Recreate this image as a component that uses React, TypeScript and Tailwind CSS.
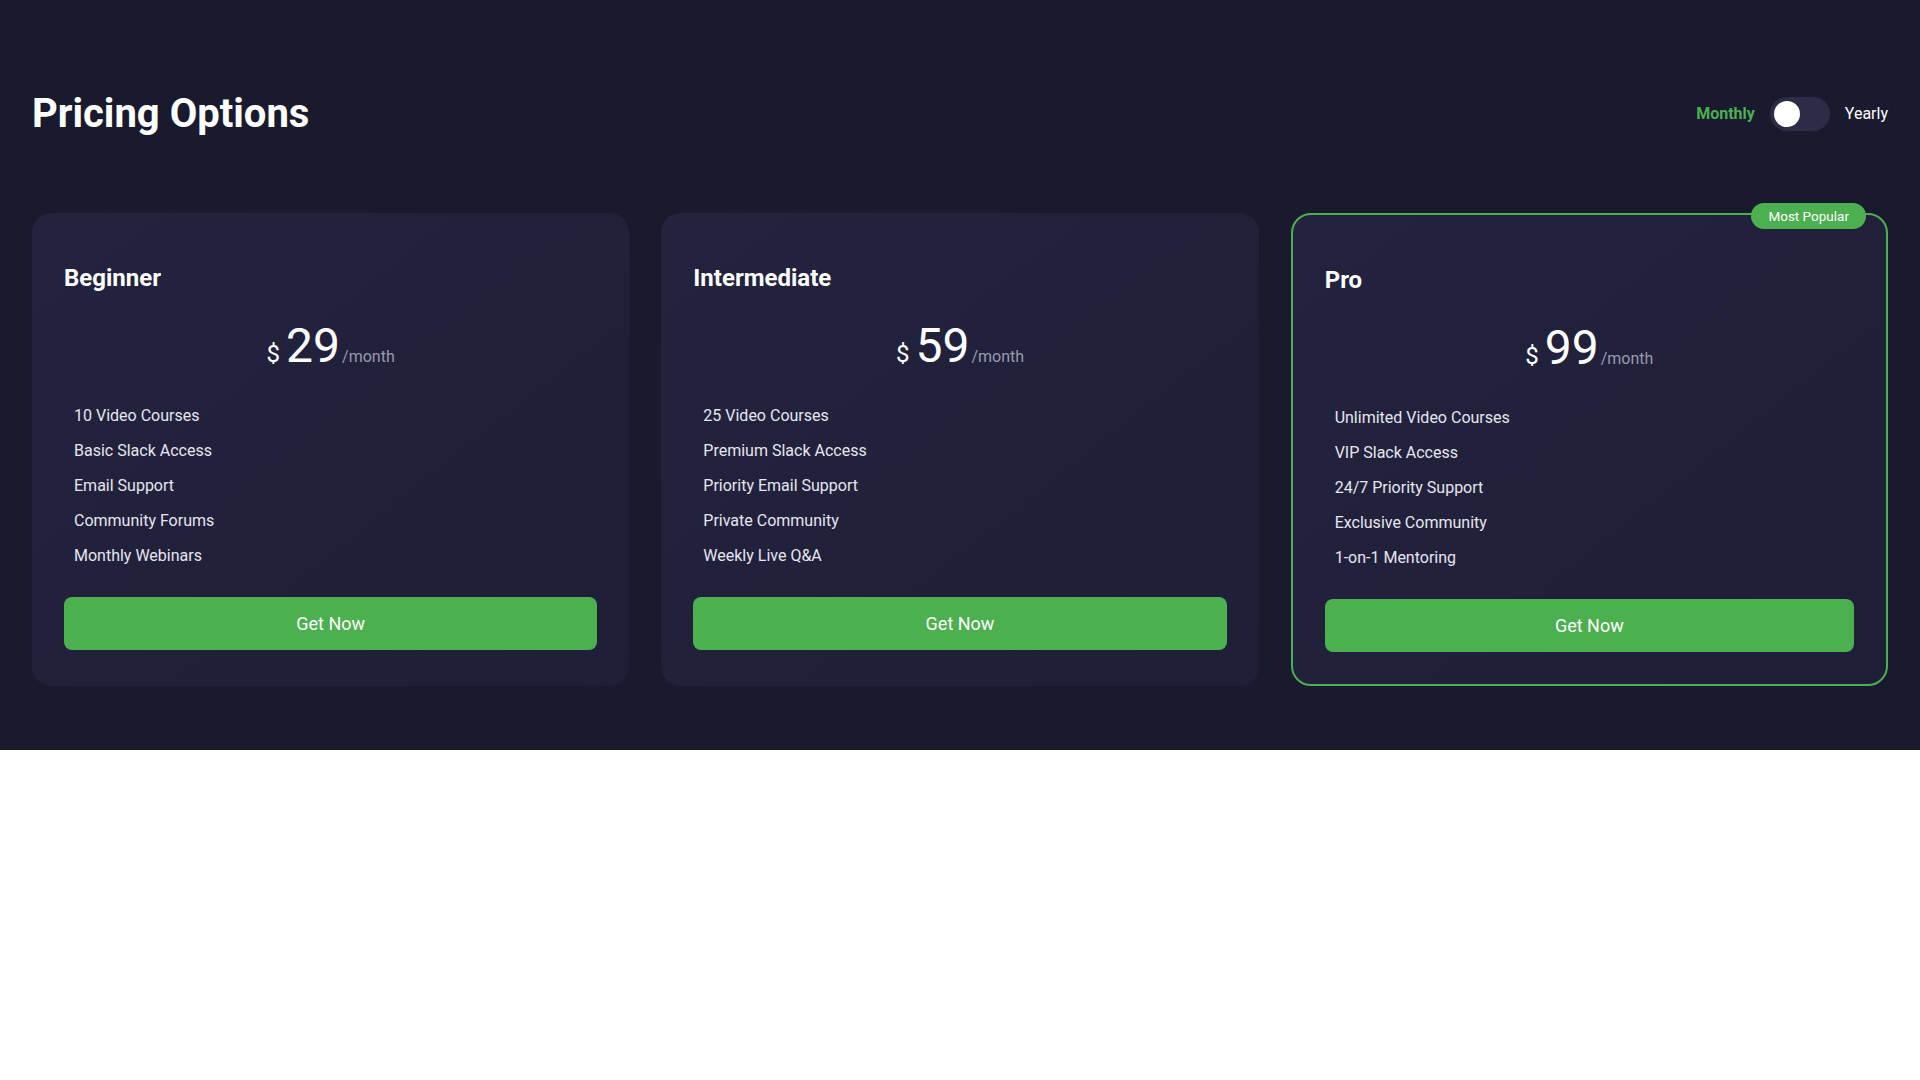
import React from "react";

type Plan = {
  name: string;
  price: string;
  features: string[];
  popular?: boolean;
};

const plans: Plan[] = [
  {
    name: "Beginner",
    price: "29",
    features: ["10 Video Courses", "Basic Slack Access", "Email Support", "Community Forums", "Monthly Webinars"],
  },
  {
    name: "Intermediate",
    price: "59",
    features: ["25 Video Courses", "Premium Slack Access", "Priority Email Support", "Private Community", "Weekly Live Q&A"],
  },
  {
    name: "Pro",
    price: "99",
    popular: true,
    features: ["Unlimited Video Courses", "VIP Slack Access", "24/7 Priority Support", "Exclusive Community", "1-on-1 Mentoring"],
  },
];

function Card({ plan }: { plan: Plan }) {
  return (
    <div
      className={
        plan.popular
          ? "relative flex flex-col rounded-[20px] border-2 border-[#4caf50] bg-gradient-to-br from-[#23233f] to-[#1e1e38] p-8"
          : "relative flex flex-col rounded-[20px] bg-gradient-to-br from-[#23233f] to-[#1e1e38] p-8"
      }
    >
      {plan.popular && (
        <div className="absolute right-[20px] top-[-12px] flex h-[26px] items-center rounded-full bg-[#4caf50] px-[17px] text-[13.5px] text-white">
          Most Popular
        </div>
      )}
      <div className="mt-[19px] text-2xl font-bold leading-[28px] text-white">{plan.name}</div>
      <div className="mt-[30px] text-center text-[48px] leading-[48px] text-white">
        <span className="mr-[6px] text-[24px] leading-none">$</span>
        <span className="leading-none">{plan.price}</span>
        <span className="ml-[2px] text-[16px] leading-none text-[#9a9aab]">/month</span>
      </div>
      <ul className="mt-[28px] flex flex-col">
        {plan.features.map((f) => (
          <li key={f} className="py-2 pl-2.5 text-base leading-[19px] text-[#e6e6ee]">
            {f}
          </li>
        ))}
      </ul>
      <button className="mt-6 h-[53px] w-full rounded-lg bg-[#4caf50] text-lg text-white">Get Now</button>
    </div>
  );
}

export default function App() {
  return (
    <div className="font-['Roboto',sans-serif]">
      <section className="bg-[#1a1a2e] px-8 pt-[90px] pb-[64px]">
        <div className="flex h-12 items-center justify-between">
          <h1 className="text-[40px] font-bold leading-[48px] text-white">Pricing Options</h1>
          <div className="flex items-center gap-[15px]">
            <span className="text-base font-bold text-[#4caf50]">Monthly</span>
            <div className="relative h-[34px] w-[60px] rounded-full bg-[#2c2c48]">
              <div className="absolute left-1 top-1 h-[26px] w-[26px] rounded-full bg-white" />
            </div>
            <span className="text-base text-white">Yearly</span>
          </div>
        </div>
        <div className="mt-[75px] grid grid-cols-3 gap-8">
          {plans.map((p) => (
            <Card key={p.name} plan={p} />
          ))}
        </div>
      </section>
    </div>
  );
}
